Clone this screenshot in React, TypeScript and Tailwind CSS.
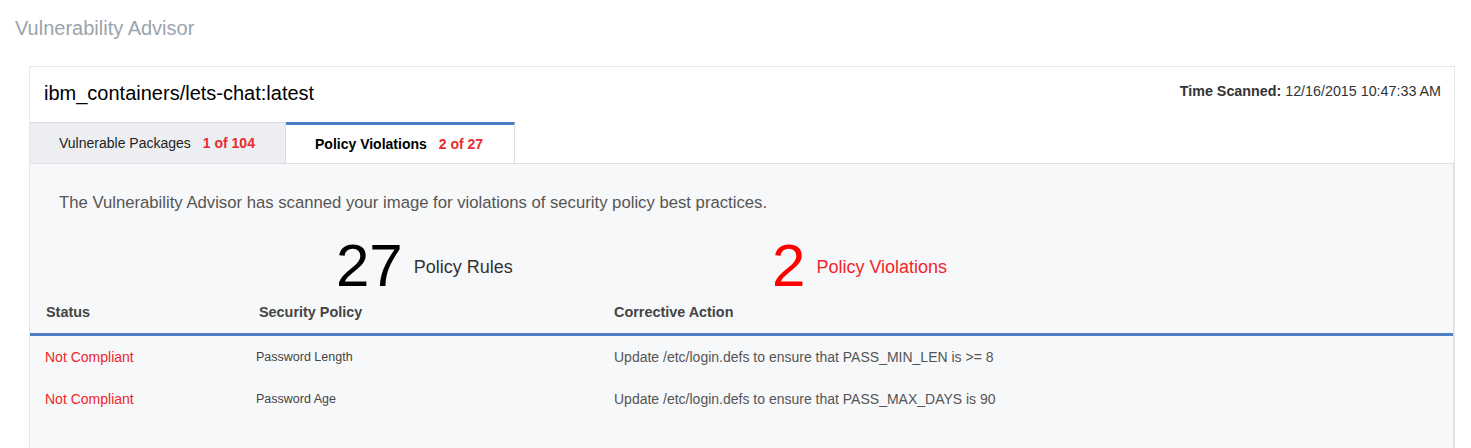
const rows = [
  {
    status: "Not Compliant",
    policy: "Password Length",
    action: "Update /etc/login.defs to ensure that PASS_MIN_LEN is >= 8",
  },
  {
    status: "Not Compliant",
    policy: "Password Age",
    action: "Update /etc/login.defs to ensure that PASS_MAX_DAYS is 90",
  },
];

export default function App() {
  return (
    <div className="min-h-[448px] bg-white font-['Liberation_Sans',Arial,sans-serif]">
      {/* Page title */}
      <h1 className="pl-[15px] pt-[16px] text-[20px] leading-[24px] text-[#9aa4ad]">
        Vulnerability Advisor
      </h1>

      {/* Card */}
      <div className="ml-[29px] mr-[16px] mt-[26px] border border-[#e6e7e8] bg-white">
        <div className="flex h-[55px] items-start justify-between pl-[14px] pr-[13px]">
          <div className="pt-[14px] text-[20px] leading-[24px] text-black">
            ibm_containers/lets-chat:latest
          </div>
          <div className="pt-[16px] text-[14.3px] leading-[16px] text-[#333]">
            <span className="font-bold">Time Scanned:</span> 12/16/2015 10:47:33 AM
          </div>
        </div>

        {/* Tabs */}
        <div className="flex h-[41px]">
          <button className="flex w-[256px] items-center border-r border-t border-[#d9dcdf] bg-[#eceef1] pl-[29px] text-[14px] text-[#222]">
            <span>Vulnerable Packages</span>
            <span className="ml-[12px] font-bold text-[#eb2a30]">1 of 104</span>
          </button>
          <button className="flex w-[229px] items-center border-r border-t-[3px] border-r-[#dcdcdc] border-t-[#4a7ec6] bg-white pl-[29px] text-[14px] text-black">
            <span className="font-bold">Policy Violations</span>
            <span className="ml-[12px] font-bold text-[#eb2a30]">2 of 27</span>
          </button>
        </div>

        {/* Panel */}
        <div className="border-r border-t border-[#dedfe1] bg-[#f7f8f9] pb-[28px]">
          <p className="pl-[29px] pt-[29px] text-[16.7px] leading-[20px] text-[#555]">
            The Vulnerability Advisor has scanned your image for violations of security policy best practices.
          </p>

          <div className="mt-[23px] flex h-[60px] items-center">
            <div className="flex w-[742px] items-center pl-[306px]">
              <span className="text-[60px] leading-[60px] text-black">27</span>
              <span className="ml-[11px] mt-[2px] text-[18px] text-[#333]">Policy Rules</span>
            </div>
            <div className="flex items-center">
              <span className="text-[60px] leading-[60px] text-[#ff0000]">2</span>
              <span className="ml-[11px] mt-[2px] text-[18px] text-[#f2262b]">Policy Violations</span>
            </div>
          </div>

          {/* Table */}
          <div className="grid grid-cols-[213px_355px_1fr] border-b-[3px] border-[#4f7fc2] pb-[12px] pt-[8px] text-[14.4px] font-bold leading-[17px] text-[#444]">
            <div className="pl-[16px]">Status</div>
            <div className="pl-[16px]">Security Policy</div>
            <div className="pl-[16px]">Corrective Action</div>
          </div>
          {rows.map((r, i) => (
            <div
              key={i}
              className="grid h-[42px] grid-cols-[213px_355px_1fr] items-center text-[14px] leading-[17px]"
            >
              <div className="pl-[15px] text-[#f0262b]">{r.status}</div>
              <div className="pl-[13px] text-[12.5px] text-[#444]">{r.policy}</div>
              <div className="pl-[16px] text-[#555]">{r.action}</div>
            </div>
          ))}
        </div>
      </div>
    </div>
  );
}
